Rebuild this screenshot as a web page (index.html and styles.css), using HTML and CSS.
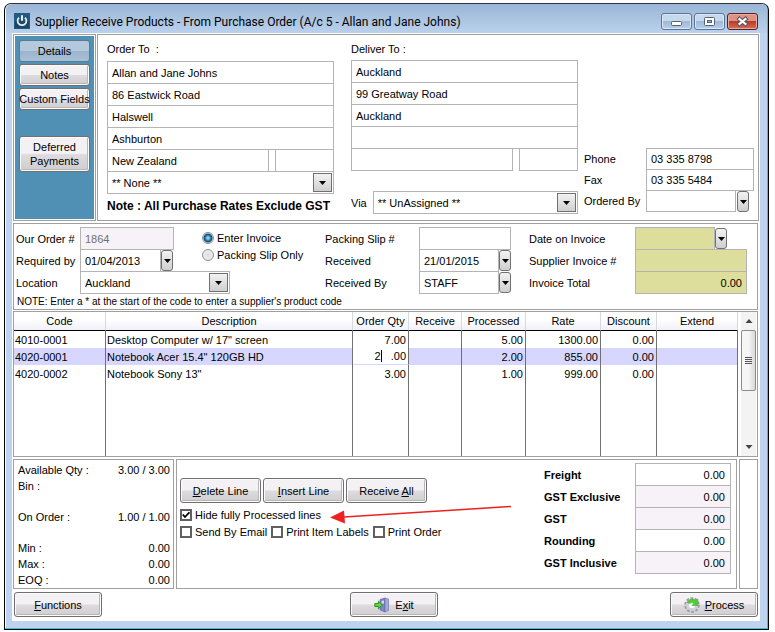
FILE: index.html
```
<!DOCTYPE html>
<html lang="en">
<head>
<meta charset="utf-8">
<title>Supplier Receive Products</title>
<link rel="stylesheet" href="styles.css">
</head>
<body>
<div class="window">
  <header class="titlebar">
    <svg class="logo" viewBox="0 0 16 16" aria-hidden="true"><rect width="16" height="16" fill="#235a82"/><rect x="1" y="8" width="14" height="7" fill="#1b4768"/><path d="M5 4.6a4.4 4.4 0 1 0 6 0" fill="none" stroke="#e8f0f6" stroke-width="1.7"/><path d="M8 2.2v5.6" stroke="#fff" stroke-width="1.8"/></svg>
    <h1>Supplier Receive Products - From Purchase Order (A/c 5 - Allan and Jane Johns)</h1>
    <div class="winbtns">
      <button type="button" aria-label="Minimise"><svg viewBox="0 0 29 15"><rect x="9.500" y="7.500" width="10" height="4" rx="1" fill="#fff" stroke="#56606e"/></svg></button>
      <button type="button" aria-label="Restore"><svg viewBox="0 0 29 15"><rect x="9.500" y="3.500" width="10" height="8" rx="1" fill="#fff" stroke="#56606e"/><rect x="12.500" y="6.500" width="4" height="2" fill="#9db9d8" stroke="#56606e"/></svg></button>
      <button type="button" class="close" aria-label="Close"><svg viewBox="0 0 29 15"><path d="M11.500 5l6 5M17.500 5l-6 5" stroke="#55525c" stroke-width="4.200" stroke-linecap="square"/><path d="M11.500 5l6 5M17.500 5l-6 5" stroke="#fff" stroke-width="2.200" stroke-linecap="square"/></svg></button>
    </div>
  </header>

  <main class="client">
    <div class="top">
      <nav class="side">
        <button type="button" class="btn active">Details</button>
        <button type="button" class="btn">Notes</button>
        <button type="button" class="btn">Custom Fields</button>
        <button type="button" class="btn tall">Deferred Payments</button>
      </nav>
      <section class="panel parties">
        <div class="party">
          <h2>Order To &nbsp;:</h2>
          <div class="stack">
            <input aria-label="Order to name" value="Allan and Jane Johns">
            <input aria-label="Order to street" value="86 Eastwick Road">
            <input aria-label="Order to suburb" value="Halswell">
            <input aria-label="Order to city" value="Ashburton">
            <div class="split"><input aria-label="Order to country" value="New Zealand"><i></i><input class="code" aria-label="Order to postcode"></div>
            <div class="combo"><select aria-label="Order to contact"><option>** None **</option></select></div>
          </div>
          <p class="note">Note : All Purchase Rates Exclude GST</p>
        </div>
        <div class="party deliver">
          <h2>Deliver To :</h2>
          <div class="stack">
            <input aria-label="Deliver to name" value="Auckland">
            <input aria-label="Deliver to street" value="99 Greatway Road">
            <input aria-label="Deliver to city" value="Auckland">
            <input aria-label="Deliver to line 4">
            <div class="split"><input aria-label="Deliver to line 5"><b></b><input class="code" aria-label="Deliver to postcode"></div>
          </div>
          <div class="via"><label for="via">Via</label><div class="combo"><select id="via"><option>** UnAssigned **</option></select></div></div>
        </div>
        <div class="contact">
          <label for="phone">Phone</label><input id="phone" value="03 335 8798">
          <label for="fax">Fax</label><input id="fax" value="03 335 5484">
          <label for="by">Ordered By</label><div class="pick"><input id="by"><button type="button" class="drop" aria-label="Choose person"></button></div>
        </div>
      </section>
    </div>

    <section class="panel details">
      <div class="cols">
        <div class="form order">
          <label for="ord">Our Order #</label><input id="ord" class="w94 dim" value="1864" readonly>
          <label for="req">Required by</label><div class="pick"><input id="req" value="01/04/2013"><button type="button" class="drop" aria-label="Pick required date"></button></div>
          <label for="loc">Location</label><div class="combo"><select id="loc"><option>Auckland</option></select></div>
        </div>
        <fieldset class="radios">
          <label><input type="radio" name="kind" checked>Enter Invoice</label>
          <label><input type="radio" name="kind">Packing Slip Only</label>
        </fieldset>
        <div class="form slip">
          <label for="slip">Packing Slip #</label><input id="slip">
          <label for="rec">Received</label><div class="pick"><input id="rec" value="21/01/2015"><button type="button" class="drop" aria-label="Pick received date"></button></div>
          <label for="recby">Received By</label><div class="pick"><input id="recby" value="STAFF"><button type="button" class="drop" aria-label="Choose staff"></button></div>
        </div>
        <div class="form invoice">
          <label for="idate">Date on Invoice</label><div class="pick"><input id="idate"><button type="button" class="drop" aria-label="Pick invoice date"></button></div>
          <label for="inum">Supplier Invoice #</label><input id="inum">
          <label for="itot">Invoice Total</label><input id="itot" class="num" value="0.00">
        </div>
      </div>
      <p class="hint">NOTE: Enter a * at the start of the code to enter a supplier's product code</p>
    </section>

    <section class="panel lines">
      <table>
        <colgroup><col class="c1"><col><col class="c3"><col class="c4"><col class="c5"><col class="c6"><col class="c7"><col class="c8"></colgroup>
        <thead><tr><th>Code</th><th>Description</th><th>Order Qty</th><th>Receive</th><th>Processed</th><th>Rate</th><th>Discount</th><th>Extend</th></tr></thead>
        <tbody>
          <tr><td>4010-0001</td><td>Desktop Computer w/ 17" screen</td><td>7.00</td><td></td><td>5.00</td><td>1300.00</td><td>0.00</td><td></td></tr>
          <tr class="sel"><td>4020-0001</td><td>Notebook Acer 15.4" 120GB HD</td><td class="edit"><span class="caret">2</span>.00</td><td></td><td>2.00</td><td>855.00</td><td>0.00</td><td></td></tr>
          <tr><td>4020-0002</td><td>Notebook Sony 13"</td><td>3.00</td><td></td><td>1.00</td><td>999.00</td><td>0.00</td><td></td></tr>
          <tr class="fill"><td></td><td></td><td></td><td></td><td></td><td></td><td></td><td></td></tr>
        </tbody>
      </table>
      <div class="scroll" aria-hidden="true">
        <svg viewBox="0 0 15 18"><path d="M4.500 11h7l-3.500-4z" fill="#444"/></svg>
        <div class="thumb"><i></i><i></i><i></i><i></i></div>
        <svg class="down" viewBox="0 0 15 18"><path d="M4.500 7h7l-3.500 4z" fill="#444"/></svg>
      </div>
    </section>

    <div class="bottom">
      <dl class="panel stock">
        <dt>Available Qty :</dt><dd>3.00 / 3.00</dd>
        <dt>Bin :</dt><dd></dd>
        <dt class="gap">On Order :</dt><dd class="gap">1.00 / 1.00</dd>
        <dt class="gap">Min :</dt><dd class="gap">0.00</dd>
        <dt>Max :</dt><dd>0.00</dd>
        <dt>EOQ :</dt><dd>0.00</dd>
      </dl>
      <section class="panel actions">
        <div class="left">
          <div class="btnrow">
            <button type="button" class="btn"><span><u>D</u>elete Line</span></button>
            <button type="button" class="btn"><span><u>I</u>nsert Line</span></button>
            <button type="button" class="btn"><span>Receive <u>A</u>ll</span></button>
          </div>
          <div class="checks"><label><input type="checkbox" checked>Hide fully Processed lines</label></div>
          <div class="checks"><label><input type="checkbox">Send By Email</label><label><input type="checkbox">Print Item Labels</label><label><input type="checkbox">Print Order</label></div>
          <svg class="arrow" viewBox="0 0 182 16" aria-hidden="true"><path d="M181 1.500L14 12" stroke="#f02020" stroke-width="1.500"/><path d="M0 12.500L14 5.500l1 13z" fill="#f02020"/></svg>
        </div>
        <div class="totals">
          <label for="t1">Freight</label><input id="t1" value="0.00">
          <label for="t2">GST Exclusive</label><input id="t2" class="dim" value="0.00" readonly>
          <label for="t3">GST</label><input id="t3" class="dim" value="0.00" readonly>
          <label for="t4">Rounding</label><input id="t4" value="0.00">
          <label for="t5">GST Inclusive</label><input id="t5" class="dim" value="0.00" readonly>
        </div>
      </section>
      <div class="panel"></div>
    </div>

    <footer class="foot">
      <button type="button" class="btn"><span><u>F</u>unctions</span></button>
      <button type="button" class="btn exit"><svg viewBox="0 0 16 16" aria-hidden="true"><path d="M6 2.500l5-1.500v14l-5-2z" fill="#7f86c8" stroke="#5a5f9c" stroke-width=".6"/><path d="M11 1l3.500 1v11.500L11 15z" fill="#a4a9da" stroke="#6a6fa8" stroke-width=".6"/><path d="M7.500 4l2.500-.6v3l-2.500.4z" fill="#d3d7f5"/><path d="M.8 6.500h3.600V4.200L8.400 8l-4 3.800V9.500H.8z" fill="#5fd83a" stroke="#228a16" stroke-width=".9"/></svg><span>E<u>x</u>it</span></button>
      <button type="button" class="btn"><svg viewBox="0 0 16 16" aria-hidden="true"><circle cx="8" cy="8" r="6.600" fill="none" stroke="#9a9da6" stroke-width="2.400" stroke-dasharray="2.700 1.500"/><circle cx="8" cy="8" r="4.600" fill="#fff" stroke="#cfd1d8" stroke-width="3"/><path d="M3 5.500A5.600 5.600 0 0 1 12 3.600L13.800 2v6.500H8l1.900-2.200a3 3 0 0 0-4 .2z" fill="#4fcf30" stroke="#37a428" stroke-width=".5"/></svg><span><u>P</u>rocess</span></button>
    </footer>
  </main>
</div>
</body>
</html>
```
FILE: styles.css
```
* { box-sizing: border-box; }
body { margin: 0; background: #fff; color: #000; font: 11px/16px "Liberation Sans", Arial, sans-serif; }
h1, h2, p, dl, dd, fieldset { margin: 0; padding: 0; border: 0; font-size: inherit; font-weight: normal; }
input, select, button { margin: 0; font: inherit; color: inherit; border-radius: 0; outline: 0; }
input, select { appearance: none; width: 100%; min-width: 0; height: 23px; border: 1px solid #b4b4b4; background: #fff; padding: 0 4px; }
.dim { background: #f7f2f7; }

.window { margin: 3px 6px 4px 4px; border: 1px solid #000; border-top-color: #333; border-radius: 7px 7px 0 0; background: #bed3ef; box-shadow: inset -1px -1px #2cc5e8, inset 1px 1px #fff; padding: 0 8px 8px 7px; }
.titlebar { display: flex; align-items: center; height: 29px; margin: 0 -7px 0 -6px; padding: 0 9px 0 8px; background: linear-gradient(#9ab6d6, #bad1ec); border-radius: 6px 6px 0 0; }
.logo { width: 16px; height: 16px; margin-right: 5px; margin-top: 5px; }
.titlebar h1 { flex: 1; margin-top: 6px; font: 12px/16px Roboto, sans-serif; white-space: nowrap; }
.winbtns { display: flex; gap: 2px; margin-top: 6px; }
.winbtns button { width: 31px; height: 17px; padding: 0; border: 1px solid #5b7394; border-radius: 3px; box-shadow: inset 0 0 0 1px #dbe8f6; background: linear-gradient(#c6d8ec 50%, #9fb9d8 50%, #b6cfea); }
.winbtns .close { border-color: #5a2024; box-shadow: inset 0 0 0 1px #e9a99c; background: linear-gradient(#dc9383 50%, #bb3b28 50%, #d2705a); }
.winbtns svg { display: block; width: 29px; height: 15px; }

.client { background: #fff; padding: 1px 2px 4px 1px; }
.panel { border: 1px solid #a0a0a0; background: #fff; }
.btn { display: flex; align-items: center; justify-content: center; gap: 5px; width: 88px; height: 25px; padding: 0; border: 1px solid #707070; border-radius: 3px; box-shadow: inset 0 0 0 1px #fbfbfb, inset -1px -1px 0 1px #b8b8b8; background: linear-gradient(#f4f1f4 48%, #dedbde 52%, #d0cdd0); }
.btn svg { width: 16px; height: 16px; }

.top { display: grid; grid-template-columns: 83px minmax(0, 1fr); gap: 1px; margin-right: -1px; }
.side { display: flex; flex-direction: column; gap: 2px; padding: 5px; border: 1px solid #a0a0a0; box-shadow: inset 0 0 0 1px #fff; background: #5090b4; }
.side .btn { width: 71px; height: 22px; white-space: nowrap; }
.side .active { border-color: #5c7a92; background: linear-gradient(#b4c9dc 48%, #9bb5cd 52%, #a8c0d6); box-shadow: none; }
.side .tall { height: 36px; line-height: 14px; margin-top: 24px; white-space: normal; }
.parties { display: flex; align-items: flex-start; padding: 6px 4px 6px 9px; }
.party { flex: none; width: 227px; margin-right: 17px; }
.party h2 { margin-bottom: 4px; }
.stack > * + * { margin-top: -1px; }
.stack > *, .stack input { display: flex; }
.deliver { margin-right: 6px; }
.deliver h2 { margin-bottom: 3px; }
.split { display: flex; }
.split input:first-child { width: 162px; }
.split .code { flex: 1; }
.split i { width: 6px; border-top: 1px solid #b4b4b4; border-bottom: 1px solid #b4b4b4; }
.split b { width: 6px; border-top: 1px solid #b4b4b4; }
.note { margin-top: 4px; font-size: 12px; font-weight: bold; white-space: nowrap; }
.combo { position: relative; display: flex; flex: 1; }
.combo::after, .drop { border: 1px solid #707070; background: url("data:image/svg+xml,%3Csvg xmlns='http://www.w3.org/2000/svg' width='7' height='4'%3E%3Cpath d='M0 0h7L3.500 4z'/%3E%3C/svg%3E") center no-repeat, linear-gradient(#f2f2f2, #cfcfcf); }
.combo::after { content: ""; position: absolute; top: 2px; right: 2px; width: 17px; bottom: 2px; pointer-events: none; }
.pick { display: flex; gap: 1px; }
.pick input { width: 81px; }
.drop { flex: none; width: 12px; height: 21px; margin-top: 1px; padding: 0; border-radius: 3px; }
.via { display: flex; align-items: center; gap: 6px; margin-top: 20px; }
.contact { flex: 1; display: grid; grid-template-columns: 62px minmax(0, 1fr); align-items: center; margin-top: 107px; }
.contact > * { margin-bottom: -1px; }
.contact input { height: 22px; }
.contact .pick input { width: auto; flex: 1; min-width: 0; }
.contact .drop { margin-right: 5px; }

.details { margin-top: 2px; padding: 3px 10px 0 2px; }
.cols { display: flex; align-items: flex-start; }
.form { display: grid; grid-template-columns: 64px 1fr; align-items: center; }
.form > * { margin-bottom: -1px; }
.order { width: 214px; }
.order .pick, .slip .pick, .invoice .pick { gap: 0; }
.form .w94 { width: 94px; color: #707070; }
.radios { flex: none; width: 123px; margin-left: -28px; padding-top: 2px; }
.radios label { display: flex; align-items: center; gap: 3px; height: 17px; white-space: nowrap; }
input[type=radio] { flex: none; width: 12px; height: 12px; padding: 0; border: 1px solid #8a8f94; border-radius: 50%; background: radial-gradient(#ddd, #f4f4f4); }
input[type=radio]:checked { background: radial-gradient(circle, #7fd0ee 1px, #1f6f9e 3px, #16476c 4px, #e8eef2 5px); }
.slip { grid-template-columns: 94px 1fr; width: 186px; }
.slip .pick input { width: 80px; }
.invoice { grid-template-columns: 106px 1fr; flex: 1; margin-left: 18px; }
.invoice input { background: #dede9c; }
.invoice .pick input { width: 80px; }
.num { text-align: right; }
.hint { margin-top: 1px; font-size: 10px; line-height: 15px; padding-left: 1px; }

.lines { display: flex; gap: 3px; height: 146px; margin-top: 1px; padding-right: 1px; }
table { flex: 1; table-layout: fixed; border-collapse: separate; border-spacing: 0; width: 0; height: 144px; }
.c1 { width: 92px; } .c3 { width: 56px; } .c4 { width: 53px; } .c5 { width: 64px; } .c6 { width: 75px; } .c7 { width: 56px; } .c8 { width: 81px; }
th { height: 19px; padding: 0; font-weight: normal; border-bottom: 1px solid #000; border-right: 1px solid #d8d8e0; background: linear-gradient(#fff 40%, #f0f0f8); }
td { height: 17px; padding: 0 2px 0 1px; line-height: 16px; border-right: 1px solid #707070; white-space: nowrap; }
td:nth-child(n+3) { text-align: right; }
.sel td { background: #d6d6ff; }
.sel .edit { background: #fff; border-bottom: 1px solid #d6d6ff; line-height: 15px; }
.caret { border-right: 1px solid #000; margin-right: 9px; }
.fill td { height: auto; }
.scroll { display: flex; flex-direction: column; width: 15px; background: #f3f3f3; }
.scroll svg { width: 15px; height: 18px; }
.thumb { display: flex; flex-direction: column; align-items: center; justify-content: center; gap: 1px; height: 61px; border: 1px solid #8c8c8c; border-radius: 2px; background: linear-gradient(90deg, #f6f6f6 50%, #d8d8d8); }
.thumb i { width: 7px; height: 1px; background: #555; }
.down { margin-top: auto; }

.bottom { display: grid; grid-template-columns: 161px 1fr 19px; gap: 2px; margin-top: 2px; }
.stock { display: grid; grid-template-columns: 1fr auto; align-content: start; padding: 2px 3px 0 4px; line-height: 16px; }
.stock dd { text-align: right; }
.stock .gap { margin-top: 15px; }
.actions { display: flex; justify-content: space-between; padding: 3px 5px 12px 3px; }
.left { position: relative; padding-top: 15px; }
.btnrow { display: flex; gap: 2px; margin-bottom: 3px; }
.btnrow .btn { width: 81px; }
.checks { display: flex; gap: 4px; height: 17px; }
.checks label { display: flex; align-items: center; gap: 3px; white-space: nowrap; }
input[type=checkbox] { flex: none; width: 12px; height: 12px; padding: 0; border: 2px solid #606060; }
input[type=checkbox]:checked { background: url("data:image/svg+xml,%3Csvg xmlns='http://www.w3.org/2000/svg' viewBox='0 0 8 8'%3E%3Cpath d='M.8 3.500L3 6 7.400 1.300' fill='none' stroke='%23000' stroke-width='1.800'/%3E%3C/svg%3E") center / 8px no-repeat; }
.arrow { position: absolute; left: 150px; top: 42px; width: 182px; height: 16px; overflow: visible; }
.totals { display: grid; grid-template-columns: 91px 96px; align-items: center; align-content: start; font-weight: bold; }
.totals > * { margin-bottom: -1px; }
.totals input { text-align: right; font-weight: normal; padding-right: 5px; }
.foot { display: flex; justify-content: space-between; padding: 3px 0 0 1px; }
.exit { margin-left: 16px; }
```
